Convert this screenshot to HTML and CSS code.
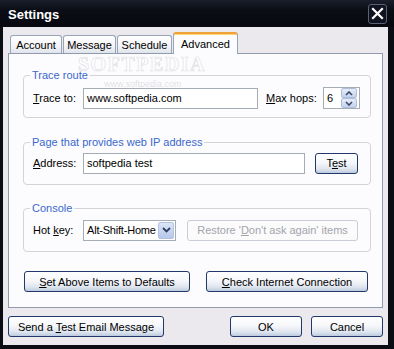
FILE: index.html
```html
<!DOCTYPE html>
<html>
<head>
<meta charset="utf-8">
<title>Settings</title>
<link rel="stylesheet" href="styles.css">
</head>
<body>
<div class="window">
  <div class="titlebar">
    <span class="title">Settings</span>
    <div class="close">
      <svg width="13" height="13" viewBox="0 0 13 13"><path d="M2 2 L11 11 M11 2 L2 11" stroke="#fff" stroke-width="2.2" stroke-linecap="square"/></svg>
    </div>
  </div>
  <div class="client">
    <div class="tabs">
      <div class="tab t-account">Account</div>
      <div class="tab t-message">Message</div>
      <div class="tab t-schedule">Schedule</div>
      <div class="tab t-advanced active">Advanced</div>
    </div>
    <div class="panel">
      <fieldset class="group g1">
        <legend>Trace route</legend>
        <div class="row">
          <span class="lbl"><u>T</u>race to:</span>
          <div class="input w-trace">www.softpedia.com</div>
          <span class="lbl-hops"><u>M</u>ax hops:</span>
          <div class="spin">
            <span class="spin-val">6</span>
            <div class="spin-btns">
              <div class="sb"><svg width="8" height="5" viewBox="0 0 8 5"><path d="M1 4 L4 1 L7 4" fill="none" stroke="#3d4a66" stroke-width="1.6"/></svg></div>
              <div class="sb"><svg width="8" height="5" viewBox="0 0 8 5"><path d="M1 1 L4 4 L7 1" fill="none" stroke="#3d4a66" stroke-width="1.6"/></svg></div>
            </div>
          </div>
        </div>
      </fieldset>
      <fieldset class="group g2">
        <legend>Page that provides web IP address</legend>
        <div class="row">
          <span class="lbl"><u>A</u>ddress:</span>
          <div class="input w-address">softpedia test</div>
          <div class="btn w-test"><span>T<u>e</u>st</span></div>
        </div>
      </fieldset>
      <fieldset class="group g3">
        <legend>Console</legend>
        <div class="row">
          <span class="lbl">Hot <u>k</u>ey:</span>
          <div class="combo">
            <span class="combo-val">Alt-Shift-Home</span>
            <div class="combo-btn"><svg width="9" height="6" viewBox="0 0 9 6"><path d="M1 1 L4.5 4.5 L8 1" fill="none" stroke="#2f3e5e" stroke-width="1.8"/></svg></div>
          </div>
          <div class="btn disabled w-restore"><span>Restore '<u>D</u>on't ask again' items</span></div>
        </div>
      </fieldset>
      <div class="actions">
        <div class="btn w-set"><span><u>S</u>et Above Items to Defaults</span></div>
        <div class="btn w-check"><span><u>C</u>heck Internet Connection</span></div>
      </div>
    </div>
    <div class="footer">
      <div class="btn w-send"><span>Send a <u>T</u>est Email Message</span></div>
      <div class="spacer"></div>
      <div class="btn w-ok"><span>OK</span></div>
      <div class="btn w-cancel"><span>Cancel</span></div>
    </div>
  </div>
  <div class="watermark wm-big">SOFTPEDIA</div>
  <div class="watermark wm-small">www.softpedia.com</div>
</div>
</body>
</html>
```
FILE: styles.css
```css
* { box-sizing: border-box; }

body {
  margin: 0;
  width: 394px;
  height: 349px;
  overflow: hidden;
  background: #0a0c14;
  font: 11px "Liberation Sans", Arial, sans-serif;
  color: #000;
}

u { text-decoration: underline; text-underline-offset: 1px; }

.window {
  position: relative;
  width: 394px;
  height: 349px;
  display: flex;
  flex-direction: column;
  background: #0b0d15;
}

.titlebar {
  height: 27px;
  flex: none;
  display: flex;
  align-items: center;
  justify-content: space-between;
  padding: 0 7px 0 8px;
  background: linear-gradient(#1b1e2c, #0c0e17 35%, #07080e);
}

.title {
  color: #fff;
  font-weight: bold;
  font-size: 13px;
  padding-top: 2px;
}

.close {
  width: 19px;
  height: 20px;
  border: 1px solid #5b6273;
  border-radius: 3px;
  background: #0f1220;
  display: flex;
  align-items: center;
  justify-content: center;
}

.client {
  height: 318px;
  margin: 0 6px 0 3px;
  background: #ebe9ed;
  padding: 5px 5px 0;
}

.tabs {
  display: flex;
  align-items: flex-end;
  height: 21px;
  padding-left: 2px;
  gap: 1px;
}

.tab {
  height: 18px;
  border: 1px solid #94a6b8;
  border-bottom: none;
  border-radius: 3px 3px 0 0;
  background: linear-gradient(#ffffff, #f5f5f7 55%, #dfe4ec);
  display: flex;
  align-items: center;
  justify-content: center;
  padding-top: 1px;
}

.t-account { width: 52px; }
.t-message { width: 53px; }
.t-schedule { width: 55px; }
.t-advanced { width: 65px; }

.tab.active {
  height: 22px;
  margin-bottom: -1px;
  position: relative;
  z-index: 1;
  background: #fcfcfe;
  border-top: 2px solid #f0a23a;
  box-shadow: inset 0 1px 0 #ffd56e;
  padding-top: 0;
}

.panel {
  height: 255px;
  border: 1px solid #919bb0;
  background: #fcfcfe;
  padding-top: 15px;
}

.group {
  margin: 0 11px 0 14px;
  padding: 0 9px;
  border: 1px solid #d3d3da;
  border-radius: 4px;
  min-width: 0;
}

.group legend {
  color: #3a68cc;
  line-height: 13px;
  padding: 0 2px;
  margin-left: -3px;
}

.g1 { padding-top: 5px; padding-bottom: 8px; }
.g2 { margin-top: 18px; padding-top: 3px; padding-bottom: 10px; }
.g3 { margin-top: 17px; padding-top: 4px; padding-bottom: 10px; }

.row {
  display: flex;
  align-items: center;
  height: 22px;
}

.lbl { width: 50px; flex: none; }

.input {
  height: 21px;
  border: 1px solid #a5acb4;
  background: #fff;
  padding: 0 3px;
  display: flex;
  align-items: center;
  flex: none;
}

.w-trace { width: 175px; }
.w-address { width: 222px; }

.lbl-hops { margin-left: 8px; width: 57px; flex: none; }

.spin {
  width: 37px;
  height: 22px;
  border: 1px solid #a5acb4;
  background: #fff;
  display: flex;
  align-items: center;
  justify-content: space-between;
  padding: 0 2px 0 3px;
}

.spin-btns {
  display: flex;
  flex-direction: column;
}

.sb {
  width: 16px;
  height: 10px;
  border: 1px solid #aebfdc;
  border-radius: 2px;
  background: linear-gradient(#e6edf9, #c3d2ee);
  display: flex;
  align-items: center;
  justify-content: center;
}

.btn {
  height: 21px;
  border: 1px solid #22386a;
  border-radius: 3px;
  background: linear-gradient(#ffffff, #f6f7fa 45%, #e0e6ef 78%, #bccadf);
  display: flex;
  align-items: center;
  justify-content: center;
  flex: none;
  white-space: nowrap;
}

.btn.disabled {
  border-color: #c8cdd6;
  background: #fbfbfc;
  color: #a2a5ab;
}

.w-test { width: 43px; margin-left: 10px; }

.combo {
  width: 93px;
  height: 21px;
  border: 1px solid #a5acb4;
  background: #fff;
  display: flex;
  align-items: center;
  justify-content: space-between;
  padding: 1px 1px 1px 3px;
  flex: none;
}

.combo-val {
  white-space: nowrap;
  letter-spacing: -0.2px;
}

.combo-btn {
  width: 16px;
  height: 17px;
  flex: none;
  border: 1px solid #b3c3df;
  border-radius: 2px;
  background: linear-gradient(#dbe5f7, #b6c7ea);
  display: flex;
  align-items: center;
  justify-content: center;
}

.w-restore { width: 171px; margin-left: 11px; }

.actions {
  display: flex;
  gap: 16px;
  margin: 19px 0 0 15px;
}

.w-set { width: 166px; }
.w-check { width: 162px; }

.footer {
  display: flex;
  align-items: center;
  margin-top: 8px;
}

.spacer { flex: 1; }

.w-send { width: 156px; }
.w-ok { width: 72px; }
.w-cancel { width: 72px; margin-left: 9px; }

.watermark {
  position: absolute;
  pointer-events: none;
  white-space: nowrap;
}

.wm-big {
  left: 78px;
  top: 57px;
  font: bold 20px/15px "Liberation Serif", serif;
  letter-spacing: 1.5px;
  color: rgba(255, 255, 255, 0.5);
  -webkit-text-stroke: 0.7px rgba(150, 150, 160, 0.3);
}

.wm-small {
  left: 104px;
  top: 80px;
  font-size: 9px;
  line-height: 9px;
  color: rgba(150, 150, 160, 0.3);
}
```
